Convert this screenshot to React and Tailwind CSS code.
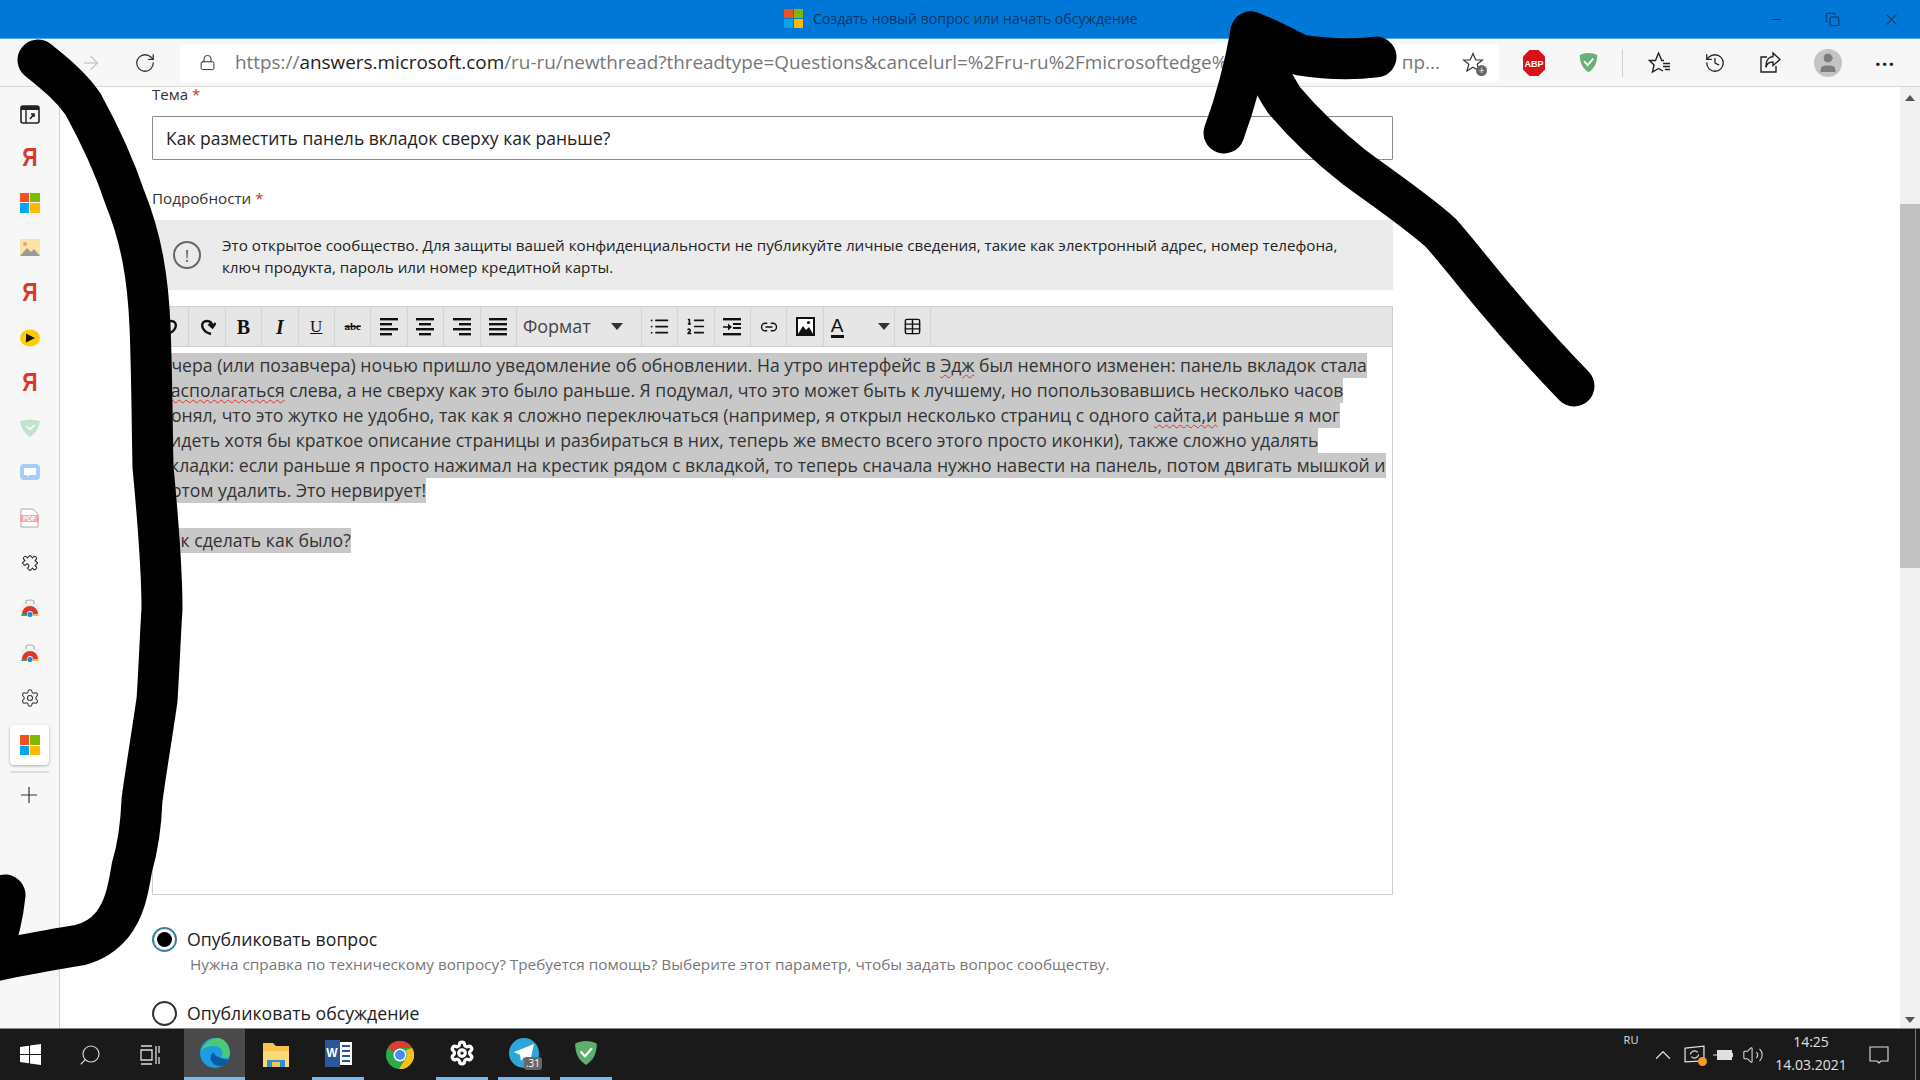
import { ArrowRight, RotateCw, Lock, History, User, Settings, Plus, Search, Minus, X, Copy, ChevronUp, Volume2, Link2, Table, List, ListOrdered } from 'lucide-react';

function MsLogo({ className }) {
    return (
        <div className={`grid grid-cols-2 gap-[1px] ${className}`}>
            <div className="bg-[#f25022]" />
            <div className="bg-[#7fba00]" />
            <div className="bg-[#00a4ef]" />
            <div className="bg-[#ffb900]" />
        </div>
    );
}

function Ya() {
    return <span className="text-[25px] font-bold leading-none scale-x-[0.85] text-[#d8392b] font-['Liberation_Sans',sans-serif]">Я</span>;
}

function Shield({ fill = '#67b279', size = 24, check = '#fff' }) {
    return (
        <svg width={size} height={size} viewBox="0 0 24 24">
            <path d="M12 1C8 1 5 2 2 3.500C2 12 5 19 12 23C19 19 22 12 22 3.500C19 2 16 1 12 1Z" fill={fill} />
            <path d="M7 10.500L11 15L17.500 7.500" fill="none" stroke={check} strokeWidth="2" />
        </svg>
    );
}

function StoreIcon() {
    return (
        <svg width="20" height="18" viewBox="0 0 20 18">
            <path d="M6 5V3Q6 1 10 1Q14 1 14 3V5" fill="none" stroke="#aaa" strokeWidth="1.2" />
            <path d="M1 5H19L20 17H0Z" fill="#eee" />
            <path d="M2 15A8 8 0 0 1 18 15H13A3 3 0 0 0 7 15Z" fill="#d8392b" />
            <path d="M2 15L1 17H7V15Z" fill="#3aa655" />
            <path d="M13 15V17H19L18 15Z" fill="#f6c026" />
            <circle cx="10" cy="15.500" r="2.500" fill="#2b7de9" />
        </svg>
    );
}

const sidebarItems = [
    <svg key="tabs" width="20" height="19" viewBox="0 0 20 19" className="mt-[4px]"><rect x="1" y="1" width="18" height="17" rx="2" fill="none" stroke="#222" strokeWidth="1.600" /><rect x="1" y="1" width="18" height="4" fill="#222" /><path d="M6 5V18" stroke="#222" strokeWidth="1.400" /><path d="M10 14L14 9M11 9H14V12" fill="none" stroke="#222" strokeWidth="1.600" /></svg>,
    <Ya key="ya1" />,
    <MsLogo key="ms1" className="w-[20px] h-[20px]" />,
    <svg key="img" width="20" height="17" viewBox="0 0 20 17"><rect width="20" height="17" fill="#fbe3a3" /><circle cx="5" cy="5" r="2" fill="#ef9a8a" /><path d="M0 17L7 9L11 13L14 10L20 17Z" fill="#9a9a9a" /></svg>,
    <Ya key="ya2" />,
    <svg key="play" width="20" height="20" viewBox="0 0 20 20"><ellipse cx="10" cy="10" rx="10" ry="8.500" fill="#fc0" /><path d="M6 5.500L15 10L6 14.500Z" fill="#111" /></svg>,
    <Ya key="ya3" />,
    <svg key="guard" width="20" height="18" viewBox="0 0 20 18"><path d="M0 2Q10 -1 20 2Q19 12 10 18Q1 12 0 2Z" fill="#c5e2cf" /><path d="M6 7L10 10.500L14.500 6" fill="none" stroke="#fff" strokeWidth="1.600" /></svg>,
    <svg key="chat" width="20" height="18" viewBox="0 0 20 18"><rect width="20" height="16" rx="4" fill="#a9cbf5" /><path d="M4 4H16V11H9L7 13V11H4Z" fill="#fff" /></svg>,
    <svg key="pdf" width="19" height="20" viewBox="0 0 19 20"><path d="M1 1H13L18 6V19H1Z" fill="#fff" stroke="#aaa" /><rect y="7" width="19" height="7" fill="#f4a6a6" /><text x="9.500" y="13" fontSize="6.500" fontWeight="700" textAnchor="middle" fill="#fff" fontFamily="Liberation Sans">PDF</text></svg>,
    <svg key="puzzle" width="18" height="18" viewBox="0 0 20 20" fill="none" stroke="#333" strokeWidth="1.300" className="rotate-45"><path d="M8 2.500a2 2 0 0 1 4 0V4h3.500a.5.5 0 0 1 .5.5V8h1.500a2 2 0 0 1 0 4H16v3.500a.5.5 0 0 1-.5.5H12v-1.500a2 2 0 0 0-4 0V16H4.500a.5.5 0 0 1-.5-.5V12H2.500a2 2 0 0 1 0-4H4V4.500a.5.5 0 0 1 .5-.5H8Z" /></svg>,
    <StoreIcon key="store1" />,
    <StoreIcon key="store2" />,
    <Settings key="gear" size={20} strokeWidth={1.300} className="text-[#333]" />,
];

function Sidebar() {
    return (
        <aside className="w-[60px] shrink-0 bg-[#f7f7f7] border-r border-[#cfcfcf] flex flex-col items-center pt-[3px]">
            {sidebarItems.map((item, i) => (
                <div key={i} className="h-[45px] w-full flex items-center justify-center">{item}</div>
            ))}
            <div className="w-[39px] h-[40px] mt-[5px] bg-white rounded-[4px] shadow-[0_1px_3px_rgba(0,0,0,0.3)] flex items-center justify-center">
                <MsLogo className="w-[20px] h-[20px]" />
            </div>
            <div className="w-[39px] h-[2px] mt-[6px] bg-[#dedede]" />
            <Plus size={26} strokeWidth={1.100} className="mt-[9px] -ml-[2px] text-[#333]" />
        </aside>
    );
}

function Cell({ children, w = 'w-[36.400px]' }) {
    return <div className={`${w} h-full shrink-0 border-r border-[#d4d4d4] flex items-center justify-center text-[#111]`}>{children}</div>;
}

// four bars; x and width of the 2nd and 4th differ per alignment
function AlignBars({ x, w = 12 }) {
    return (
        <svg width="20" height="18" viewBox="0 0 20 18" fill="#111">
            <rect x="1" y="0" width="18" height="2.400" />
            <rect x={x} y="5" width={w} height="2.400" />
            <rect x="1" y="10" width="18" height="2.400" />
            <rect x={x} y="15" width={w} height="2.400" />
        </svg>
    );
}

function EditorToolbar() {
    return (
        <div className="h-[41px] mt-[16px] bg-[#e6e6e6] border border-[#cfcfcf] flex">
            <Cell>
                <svg width="18" height="18" viewBox="0 0 18 18" fill="none" stroke="#111" strokeWidth="2.400"><path d="M5 16C16 13 16 3 9 3C6 3 4 5 3.500 8" /><path d="M0.500 5L3.500 9.500L7.500 6" /></svg>
            </Cell>
            <Cell>
                <svg width="18" height="18" viewBox="0 0 18 18" fill="none" stroke="#111" strokeWidth="2.400"><path d="M13 16C2 13 2 3 9 3C12 3 14 5 14.500 8" /><path d="M17.500 5L14.500 9.500L10.500 6" /></svg>
            </Cell>
            <Cell><span className="text-[20px] font-bold font-['Liberation_Serif',serif]">B</span></Cell>
            <Cell><span className="text-[20px] font-bold italic font-['Liberation_Serif',serif]">I</span></Cell>
            <Cell><span className="text-[17px] underline font-['Liberation_Serif',serif]">U</span></Cell>
            <Cell><span className="text-[11px] font-bold line-through font-['Liberation_Serif',serif]">abc</span></Cell>
            <Cell><AlignBars x={1} /></Cell>
            <Cell><AlignBars x={4} /></Cell>
            <Cell><AlignBars x={7} /></Cell>
            <Cell><AlignBars x={1} w={18} /></Cell>
            <Cell w="w-[125px]">
                <div className="w-full pl-[6px] pr-[18px] flex items-center justify-between">
                    <span className="text-[18px] text-[#444]">Формат</span>
                    <span className="border-x-[6px] border-x-transparent border-t-[7px] border-t-[#333]" />
                </div>
            </Cell>
            <Cell><List size={21} strokeWidth={2} /></Cell>
            <Cell><ListOrdered size={21} strokeWidth={1.800} /></Cell>
            <Cell>
                <svg width="20" height="20" viewBox="0 0 20 20" fill="#111"><rect x="1" y="1" width="18" height="2.400" /><rect x="11" y="6" width="8" height="2" /><rect x="11" y="10" width="8" height="2" /><rect x="1" y="16" width="18" height="2.400" /><path d="M1 9.200H6V6.500L10 10L6 13.500V10.800H1Z" /></svg>
            </Cell>
            <Cell><Link2 size={18} strokeWidth={1.800} /></Cell>
            <Cell>
                <svg width="19" height="19" viewBox="0 0 19 19"><rect x="1" y="1" width="17" height="17" fill="#fff" stroke="#111" strokeWidth="2" /><path d="M2 17L7 9L10 13L13 10L17 17Z" fill="#111" /><circle cx="12.500" cy="5.500" r="1.600" fill="#111" /></svg>
            </Cell>
            <Cell w="w-[71px]">
                <div className="w-full pl-[7px] pr-[4px] flex items-center justify-between">
                    <span className="text-[19px] leading-[19px] border-b-[3px] border-[#111] font-['Liberation_Sans',sans-serif]">A</span>
                    <span className="border-x-[6px] border-x-transparent border-t-[7px] border-t-[#333]" />
                </div>
            </Cell>
            <Cell><Table size={19} strokeWidth={1.800} /></Cell>
        </div>
    );
}

const squiggle = 'underline decoration-wavy decoration-[#d9342b] decoration-1 underline-offset-2';

function Line({ children }) {
    return <div className="w-fit h-[25px] bg-[#c8c8c8] whitespace-nowrap">{children}</div>;
}

function Editor() {
    return (
        <div className="h-[548px] border border-t-0 border-[#cfcfcf] pt-[6px] pl-[7px] text-[17.640px] leading-[25px] text-[#333]">
            <Line>Вчера (или позавчера) ночью пришло уведомление об обновлении. На утро интерфейс в <span className={squiggle}>Эдж</span> был немного изменен: панель вкладок стала</Line>
            <Line><span className={squiggle}>располагаться</span> слева, а не сверху как это было раньше. Я подумал, что это может быть к лучшему, но попользовавшись несколько часов</Line>
            <Line>понял, что это жутко не удобно, так как я сложно переключаться (например, я открыл несколько страниц с одного <span className={squiggle}>сайта,и</span> раньше я мог</Line>
            <Line>видеть хотя бы краткое описание страницы и разбираться в них, теперь же вместо всего этого просто иконки), также сложно удалять</Line>
            <Line>вкладки: если раньше я просто нажимал на крестик рядом с вкладкой, то теперь сначала нужно навести на панель, потом двигать мышкой и</Line>
            <Line>потом удалить. Это нервирует!</Line>
            <div className="h-[25px]" />
            <Line>Как сделать как было?</Line>
        </div>
    );
}

function TaskIcon({ children, active, bar }) {
    return (
        <div className={`h-full flex items-center justify-center ${active ? 'w-[61px] bg-[#4a4a4a]' : 'w-[62px]'}`}>
            <div className={`h-full flex items-center justify-center ${active ? 'w-full border-b-[3px] border-[#76b9ed]' : bar ? 'w-[52px] border-b-[3px] border-[#76b9ed]' : 'w-[52px]'}`}>
                {children}
            </div>
        </div>
    );
}

function Taskbar() {
    return (
        <footer className="h-[52px] shrink-0 bg-[#1a1a1a] border-t border-[#8a8a8a] flex items-center text-white">
            <div className="w-[60px] h-full flex items-center justify-center">
                <svg width="21" height="21" viewBox="0 0 21 21" fill="#fff"><path d="M0 3L9 1.700V10H0ZM10 1.500L21 0V10H10ZM0 11H9V19.300L0 18ZM10 11H21V21L10 19.500Z" /></svg>
            </div>
            <div className="w-[60px] h-full flex items-center justify-center">
                <Search size={24} strokeWidth={1.100} className="-scale-x-100 text-[#ddd]" />
            </div>
            <div className="w-[64px] pr-[4px] h-full flex items-center justify-center">
                <svg width="20" height="20" viewBox="0 0 20 20" fill="none" stroke="#ddd" strokeWidth="1.300"><path d="M1 1H12M1 19H12M1 5H12V15H1ZM16 1V19" /><path d="M19 1V8M19 12V19" /></svg>
            </div>
            <TaskIcon active>
                <svg width="32" height="32" viewBox="0 0 32 32">
                    <circle cx="16" cy="16" r="15" fill="#1b9de2" />
                    <path d="M2 14C5 5 13 1 18 1C26 1 31 8 31 17C31 21 27 22 22 21C26 15 22 9 15 9C9 9 4 11 2 14Z" fill="#4ac97c" />
                    <path d="M22 21C18 20 15 18 15 15C11 17 10 23 15 27C20 31 27 29 30 23C28 22 25 22 22 21Z" fill="#0c59a4" />
                </svg>
            </TaskIcon>
            <TaskIcon>
                <svg width="28" height="26" viewBox="0 0 28 26"><path d="M1 1H11L14 4H27V25H1Z" fill="#f6c44e" /><path d="M1 9H27V25H1Z" fill="#fbd976" /><rect x="5" y="18" width="18" height="7" fill="#2f8fd8" /><rect x="10" y="20" width="8" height="5" fill="#f6c44e" /></svg>
            </TaskIcon>
            <TaskIcon bar>
                <div className="w-[27px] h-[27px] flex items-center">
                    <div className="w-[15px] h-[27px] bg-[#2b579a] flex items-center justify-center text-[12px] font-bold font-['Liberation_Sans',sans-serif]">W</div>
                    <div className="w-[12px] h-[23px] bg-white flex flex-col justify-evenly px-[2px]">
                        <div className="h-[2px] bg-[#2b579a]" /><div className="h-[2px] bg-[#2b579a]" /><div className="h-[2px] bg-[#2b579a]" /><div className="h-[2px] bg-[#2b579a]" />
                    </div>
                </div>
            </TaskIcon>
            <TaskIcon>
                <svg width="28" height="28" viewBox="0 0 28 28">
                    <circle cx="14" cy="14" r="14" fill="#2da94f" />
                    <path d="M2 6.500A14 14 0 0 1 26.100 7H14A7 7 0 0 0 7.500 11.500Z" fill="#e33b2e" />
                    <path d="M26.100 7A14 14 0 0 1 13 28L19.500 18A7 7 0 0 0 19.500 9.500Z" fill="#fbc116" />
                    <circle cx="14" cy="14" r="6.500" fill="#fff" /><circle cx="14" cy="14" r="5" fill="#4a8af4" />
                </svg>
            </TaskIcon>
            <TaskIcon bar><Settings size={26} strokeWidth={3} /></TaskIcon>
            <TaskIcon bar>
                <div className="relative w-[30px] h-[30px] rounded-full bg-[#2ea6da] flex items-center justify-center">
                    <svg width="20" height="18" viewBox="0 0 20 18"><path d="M0 8L20 0L16 18L10 13L7 17L6 11Z" fill="#fff" /></svg>
                    <span className="absolute -right-[3px] -bottom-[2px] px-[2px] rounded-[3px] bg-[#666] text-[10px] leading-[13px]">.31</span>
                </div>
            </TaskIcon>
            <TaskIcon bar><Shield size={26} fill="#5fae6d" /></TaskIcon>

            <div className="ml-auto h-full flex items-center text-[#e0e0e0]">
                <div className="w-[30px] h-full pt-[3px] text-center text-[11px] leading-[15px]">RU</div>
                <div className="w-[34px] flex justify-center"><ChevronUp size={26} strokeWidth={1.100} /></div>
                <div className="relative w-[28px] flex justify-center">
                    <svg width="21" height="19" viewBox="0 0 20 18" fill="none" stroke="#e0e0e0" strokeWidth="1.200"><path d="M1 3L19 1V15L1 16ZM6 9A4 4 0 0 1 13 7M14 9A4 4 0 0 1 7 11" /></svg>
                    <span className="absolute right-[1px] -bottom-[2px] w-[9px] h-[9px] rounded-full bg-[#f59a23]" />
                </div>
                <div className="w-[30px] flex justify-center">
                    <svg width="20" height="12" viewBox="0 0 20 12"><path d="M0 6H4" stroke="#e0e0e0" /><rect x="4.500" y="1.500" width="14" height="9" fill="#e0e0e0" stroke="#e0e0e0" /><rect x="18.500" y="4" width="1.500" height="4" fill="#e0e0e0" /></svg>
                </div>
                <div className="w-[30px] flex justify-center"><Volume2 size={22} strokeWidth={1.100} /></div>
                <div className="w-[86px] -mt-[3px] flex flex-col items-center text-[14px] leading-[23px]">
                    <span>14:25</span>
                    <span>14.03.2021</span>
                </div>
                <div className="w-[50px] flex justify-center">
                    <svg width="20" height="20" viewBox="0 0 20 20" fill="none" stroke="#e0e0e0" strokeWidth="1.100"><path d="M1 2H19V16H12L10 18L8 16H1Z" /></svg>
                </div>
                <div className="w-[5px] h-full ml-[11px] border-l border-[#777]" />
            </div>
        </footer>
    );
}

export default function App() {
    return (
        <div className="relative w-[1920px] h-[1080px] overflow-hidden flex flex-col bg-white font-['Open_Sans','Noto_Sans',sans-serif]">
            {/* заголовок окна */}
            <header className="h-[39px] shrink-0 bg-[#0078d7] border-b border-[#5aa9e6] flex items-center">
                <div className="ml-[784px] flex items-center gap-[10px]">
                    <MsLogo className="w-[19px] h-[19px]" />
                    <span className="text-[14.100px] text-[#0c3563]">Создать новый вопрос или начать обсуждение</span>
                </div>
                <div className="ml-auto flex items-center text-[#0c3563]">
                    <Minus size={15} strokeWidth={1.700} className="mr-[41px]" />
                    <Copy size={15} strokeWidth={1.700} className="mr-[42px]" />
                    <X size={19} strokeWidth={1.300} className="mr-[19px]" />
                </div>
            </header>

            {/* панель браузера */}
            <div className="h-[48px] shrink-0 bg-[#f7f7f7] border-b border-[#d6d6d6] flex items-center">
                <div className="w-[115px] pl-[80px]"><ArrowRight size={22} strokeWidth={1.100} className="text-[#b8b8b8]" /></div>
                <div className="w-[65px] pl-[19px]"><RotateCw size={22} strokeWidth={1.400} className="text-[#333]" /></div>
                <div className="w-[1319px] h-[38px] bg-white rounded-[4px] flex items-center">
                    <Lock size={17} strokeWidth={1.400} className="ml-[19px] text-[#333]" />
                    <div className="ml-[19px] text-[18.900px] whitespace-nowrap text-[#777]">
                        https://<span className="text-[#222]">answers.microsoft.com</span>/ru-ru/newthread?threadtype=Questions&amp;cancelurl=%2Fru-ru%2Fmicrosoftedge%
                    </div>
                    <span className="ml-auto text-[18.900px] text-[#777]">пр...</span>
                    <div className="relative ml-[22px] mr-[15px]">
                        <svg width="22" height="22" viewBox="0 0 22 22" fill="none" stroke="#333" strokeWidth="1.200"><path d="M11 1.500L13.800 8H20.500L15.200 12.300L17 19L11 15.200L5 19L6.800 12.300L1.500 8H8.200Z" /></svg>
                        <span className="absolute -right-[3px] -bottom-[2px] w-[11px] h-[11px] rounded-full bg-[#666] text-white text-[10px] leading-[10px] text-center">+</span>
                    </div>
                </div>
                <div className="ml-[24px]">
                    <svg width="22" height="26" viewBox="0 0 22 26">
                        <path d="M6.500 0H15.500L22 6.500V19.500L15.500 26H6.500L0 19.500V6.500Z" fill="#d6131b" />
                        <text x="11" y="17" fontSize="9" fontWeight="700" textAnchor="middle" fill="#fff" fontFamily="Liberation Sans Narrow, Liberation Sans, sans-serif">ABP</text>
                    </svg>
                </div>
                <div className="ml-[33px] flex relative"><Shield size={21} fill="#67b279" /></div>
                <div className="ml-[23px] w-px h-[28px] bg-[#cfcfcf]" />
                <svg width="24" height="24" viewBox="0 0 24 24" fill="none" stroke="#222" strokeWidth="1.400" className="ml-[25px]"><path d="M16 9.500H13.800L10.500 2L7.500 9.500H1.500L6 14L4.500 21L10.500 17.500L15 20M15 12.500H22M15 15.500H22M17 18.500H22" /></svg>
                <History size={22} strokeWidth={1.400} className="ml-[32px] text-[#222]" />
                <svg width="24" height="24" viewBox="0 0 24 24" fill="none" stroke="#222" strokeWidth="1.400" className="ml-[32px]"><path d="M9 6H3V21H18V15" /><path d="M15 2L22 8.500L15 14.500V11C11 11 8.500 13 8 16.500C7.500 10 10.500 6 15 5.500Z" /></svg>
                <div className="ml-[32px] w-[28px] h-[28px] rounded-full bg-[#c4c4c4] flex items-center justify-center text-[#7d7d7d]"><User size={24} fill="#7d7d7d" strokeWidth={1} /></div>
                <span className="ml-[33px] text-[20px] leading-none tracking-[1px] font-bold text-[#222] -translate-y-[4px]">...</span>
            </div>

            <div className="flex-1 min-h-0 flex">
                <Sidebar />
                <main className="flex-1 min-w-0 pl-[92px]">
                    <div className="w-[1241px] text-[#333]">
                        <label className="block h-[14px] text-[15px] leading-[14px]">Тема <span className="text-[#b33]">*</span></label>
                        <div className="mt-[15px] h-[44px] border border-[#8a8a8a] rounded-[1px] flex items-center pl-[13px] text-[17.500px] text-[#222]">Как разместить панель вкладок сверху как раньше?</div>
                        <label className="block mt-[29px] h-[18px] text-[15.200px] leading-[18px]">Подробности <span className="text-[#b33]">*</span></label>
                        <div className="mt-[13px] h-[70px] bg-[#ebebeb] flex items-center">
                            <div className="ml-[21px] w-[28px] h-[28px] rounded-full border-2 border-[#666] flex items-center justify-center text-[#555] text-[17px] leading-none">!</div>
                            <p className="ml-[21px] pt-[2px] w-[1135px] text-[15.200px] leading-[22px] text-[#222]">Это открытое сообщество. Для защиты вашей конфиденциальности не публикуйте личные сведения, такие как электронный адрес, номер телефона, ключ продукта, пароль или номер кредитной карты.</p>
                        </div>
                        <EditorToolbar />
                        <Editor />
                        <div className="mt-[31px] flex items-center h-[26px]">
                            <div className="w-[25px] h-[25px] rounded-full border-2 border-[#3f7f9c] flex items-center justify-center"><div className="w-[15px] h-[15px] rounded-full bg-black" /></div>
                            <span className="ml-[10px] text-[17.700px] text-[#222]">Опубликовать вопрос</span>
                        </div>
                        <p className="ml-[38px] mt-[2px] text-[15.350px] leading-[20px] text-[#777]">Нужна справка по техническому вопросу? Требуется помощь? Выберите этот параметр, чтобы задать вопрос сообществу.</p>
                        <div className="mt-[26px] flex items-center h-[26px]">
                            <div className="w-[25px] h-[25px] rounded-full border-2 border-[#333]" />
                            <span className="ml-[10px] text-[17.700px] text-[#222]">Опубликовать обсуждение</span>
                        </div>
                    </div>
                </main>
                <div className="w-[20px] shrink-0 bg-[#f0f0f0] flex flex-col items-center">
                    <span className="mt-[8px] border-x-[5px] border-x-transparent border-b-[6px] border-b-[#555]" />
                    <div className="w-full h-[364px] mt-[103px] bg-[#c2c2c2]" />
                    <span className="mt-auto mb-[5px] border-x-[5px] border-x-transparent border-t-[6px] border-t-[#555]" />
                </div>
            </div>

            <Taskbar />

            {/* чёрные пометки поверх скриншота */}
            <svg className="absolute inset-0 pointer-events-none" width="1920" height="1080" fill="none" stroke="#000" strokeWidth="41" strokeLinecap="round" strokeLinejoin="round">
                <path d="M38 60C58 76 72 88 83 104C100 135 114 165 125 198C142 240 148 280 150 326C152 375 152 420 153 467C158 520 162 565 162 609C160 640 159 670 157 700C152 735 146 770 142 800C141 825 138 847 132 867C128 892 124 910 112 925C102 937 92 942 80 945C50 950 20 955 -10 962" />
                <path d="M5 895C3 915 -2 935 -8 950" />
                <path d="M1376 57C1350 60 1325 59 1300 55C1285 48 1268 38 1251 32C1246 60 1238 95 1224 133" />
                <path d="M1251 32C1262 60 1272 82 1284 100C1305 125 1330 148 1354 167C1385 190 1415 210 1441 233C1460 255 1478 278 1494 297C1520 328 1545 356 1574 386" />
            </svg>
        </div>
    );
}
